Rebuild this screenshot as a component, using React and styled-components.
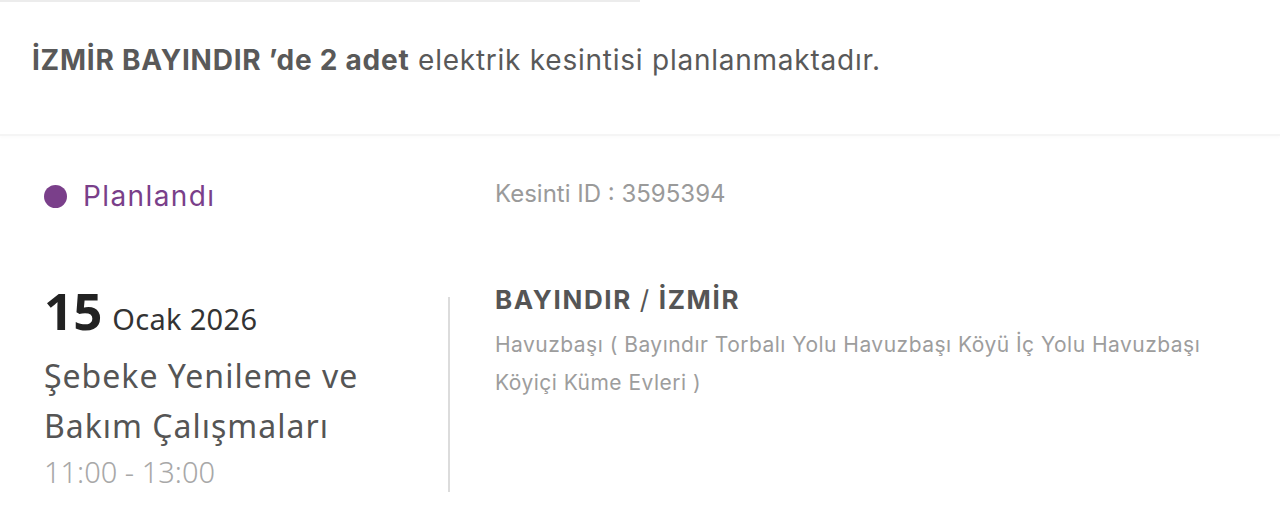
import React from "react";
import styled, { createGlobalStyle } from "styled-components";

const Global = createGlobalStyle`
  html, body { margin: 0; padding: 0; background: #fff; }
  body { font-family: "Inter", "Liberation Sans", sans-serif; }
  * { box-sizing: border-box; }
`;

const Page = styled.div`
  width: 1280px;
  height: 519px;
  background: #fff;
  overflow: hidden;
`;

const TopRule = styled.div`
  width: 640px;
  height: 2px;
  background: #ececec;
`;

const Header = styled.div`
  height: 134px;
  padding: 41px 32px 0 32px;
  font-size: 28px;
  line-height: 34px;
  letter-spacing: 0.76px;
  color: #595959;
  border-bottom: 2px solid #f5f5f5;
  box-shadow: 0 2px 3px rgba(0, 0, 0, 0.015);
`;

const Strong = styled.b`
  font-weight: 700;
`;

const Row = styled.div`
  display: grid;
  grid-template-columns: 404px 2px 1fr;
  padding-left: 44px;
  height: ${(p) => p.$h}px;
  align-items: ${(p) => p.$align || "start"};
`;

const Status = styled.div`
  display: flex;
  align-items: center;
  gap: 16px;
  font-size: 28px;
  letter-spacing: 1.4px;
  color: #7a3f8a;
`;

const Dot = styled.span`
  width: 23px;
  height: 23px;
  border-radius: 50%;
  background: #7a3f8a;
`;

const IdLine = styled.div`
  grid-column: 3;
  padding-left: 45px;
  padding-bottom: 6px;
  font-size: 24px;
  color: #9a9a9a;
`;

const DateBlock = styled.div`
  display: flex;
  flex-direction: column;
  padding-top: 24px;
  font-family: "Noto Sans", "Open Sans", sans-serif;
`;

const DateRow = styled.div`
  display: flex;
  align-items: baseline;
  gap: 10px;
`;

const Day = styled.span`
  font-size: 51px;
  font-weight: 700;
  line-height: 60px;
  color: #222;
`;

const Month = styled.span`
  font-size: 29px;
  letter-spacing: 0.3px;
  color: #333;
`;

const Title = styled.div`
  margin-top: 11px;
  font-size: 32px;
  line-height: 50px;
  letter-spacing: 1px;
  color: #555;
`;

const Time = styled.div`
  margin-top: 1px;
  font-size: 29px;
  line-height: 40px;
  font-weight: 300;
  color: #a8a8a8;
`;

const VRule = styled.div`
  margin-top: 41px;
  height: 195px;
  background: #dcdcdc;
`;

const PlaceBlock = styled.div`
  padding-left: 45px;
  padding-top: 29px;
`;

const Place = styled.div`
  font-size: 26px;
  font-weight: 700;
  line-height: 30px;
  letter-spacing: 1.65px;
  color: #555;
`;

const Slash = styled.span`
  font-weight: 400;
`;

const Address = styled.div`
  margin-top: 11px;
  width: 720px;
  font-size: 21px;
  line-height: 38px;
  letter-spacing: 0.48px;
  color: #9d9d9d;
`;

export default function App() {
  return (
    <Page>
      <Global />
      <TopRule />
      <Header>
        <Strong>İZMİR BAYINDIR ’de 2 adet</Strong> elektrik kesintisi planlanmaktadır.
      </Header>
      <Row $h={120} $align="center">
        <Status>
          <Dot />
          Planlandı
        </Status>
        <IdLine>Kesinti ID : 3595394</IdLine>
      </Row>
      <Row $h={263}>
        <DateBlock>
          <DateRow>
            <Day>15</Day>
            <Month>Ocak 2026</Month>
          </DateRow>
          <Title>
            Şebeke Yenileme ve
            <br />
            Bakım Çalışmaları
          </Title>
          <Time>11:00 - 13:00</Time>
        </DateBlock>
        <VRule />
        <PlaceBlock>
          <Place>
            BAYINDIR <Slash>/</Slash> İZMİR
          </Place>
          <Address>
            Havuzbaşı ( Bayındır Torbalı Yolu Havuzbaşı Köyü İç Yolu Havuzbaşı Köyiçi Küme Evleri )
          </Address>
        </PlaceBlock>
      </Row>
    </Page>
  );
}
